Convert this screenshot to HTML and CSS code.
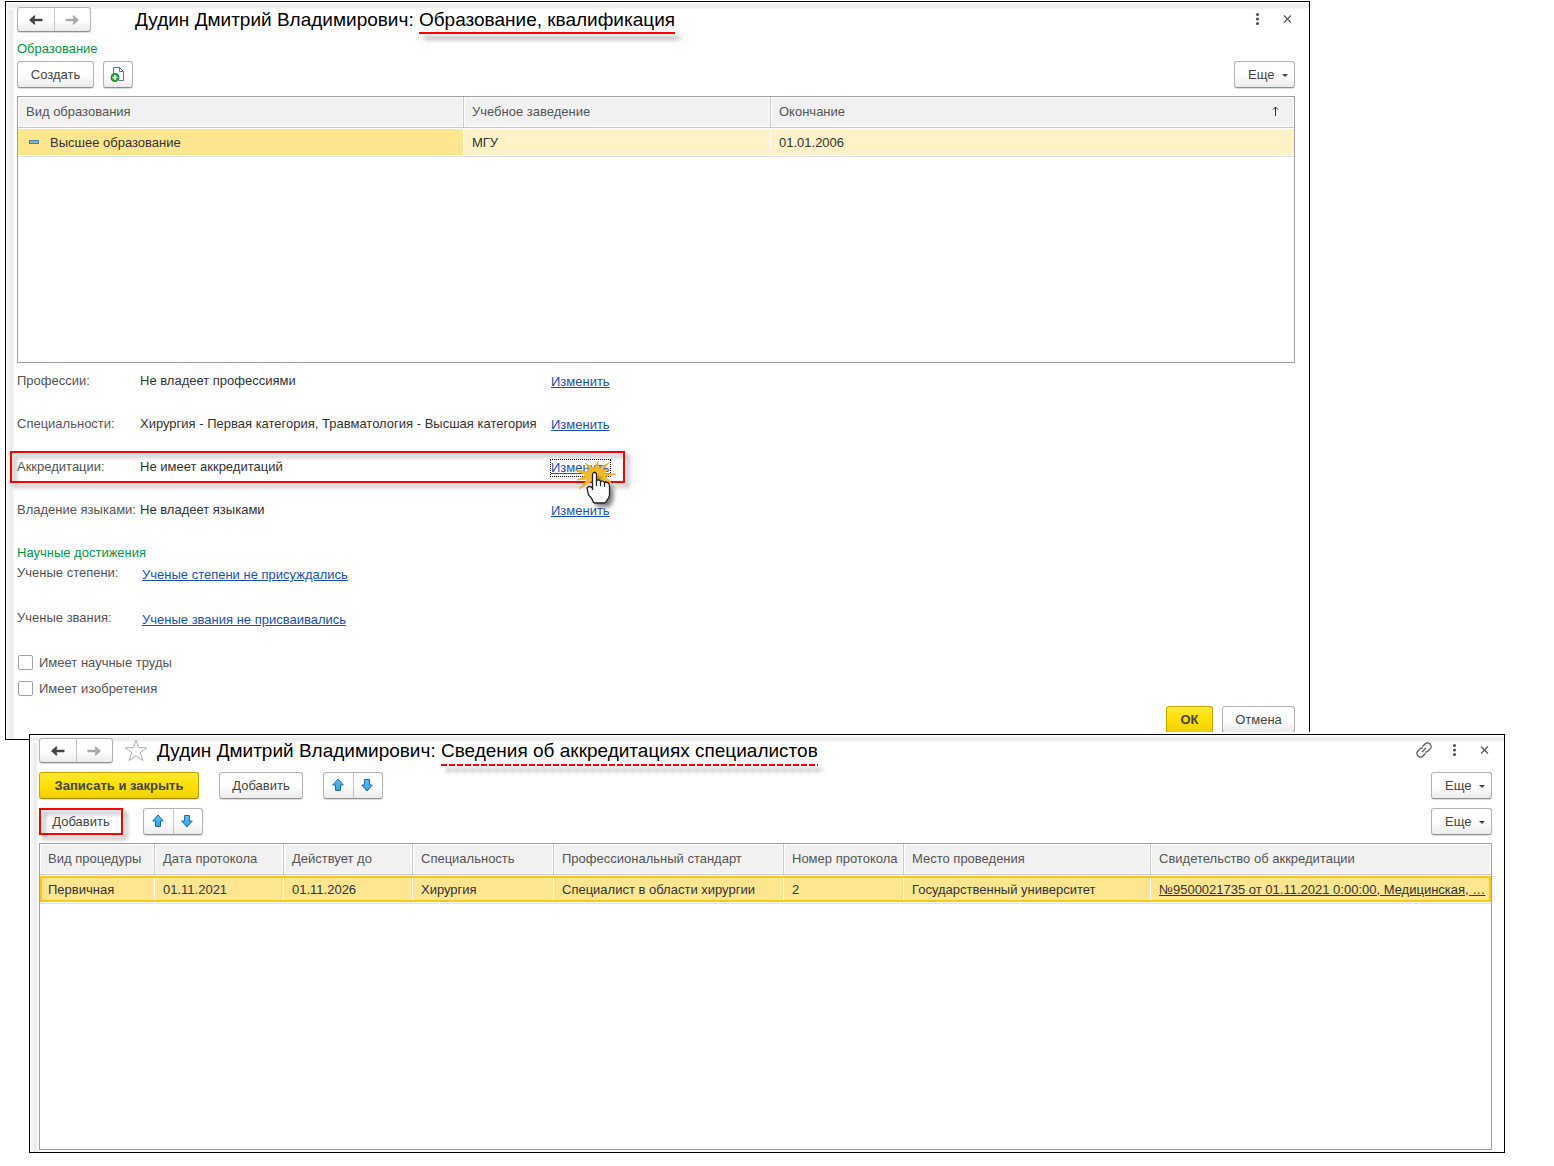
FILE: index.html
```html
<!DOCTYPE html>
<html lang="ru">
<head>
<meta charset="utf-8">
<title>Образование, квалификация</title>
<link rel="stylesheet" href="styles.css">
</head>
<body>
<svg class="defs" aria-hidden="true">
  <defs>
    <linearGradient id="blue" x1="0" y1="0" x2="0" y2="1"><stop offset="0" stop-color="#5cc0f8"/><stop offset="1" stop-color="#35a0e4"/></linearGradient>
    <symbol id="back" viewBox="0 0 16 12"><path d="M1 6 6 1.500H7.500L6.500 4.800H14.500V7.200H6.500L7.500 10.500H6Z"/></symbol>
    <symbol id="forward" viewBox="0 0 16 12"><path d="M15 6 10 1.500H8.500L9.500 4.800H1.500V7.200H9.500L8.500 10.500H10Z"/></symbol>
    <symbol id="up" viewBox="0 0 12 14"><path d="M6 1 11.300 7H8.500V12.500H3.500V7H.7Z" fill="url(#blue)" stroke="#1f6ea8"/></symbol>
    <symbol id="down" viewBox="0 0 12 14"><path d="M6 13 11.300 7H8.500V1.500H3.500V7H.7Z" fill="url(#blue)" stroke="#1f6ea8"/></symbol>
    <symbol id="kebab" viewBox="0 0 16 16"><circle cx="8.500" cy="3.500" r="1.600"/><circle cx="8.500" cy="8" r="1.600"/><circle cx="8.500" cy="12.500" r="1.600"/></symbol>
    <symbol id="close" viewBox="0 0 16 16"><path d="M5 4.500 12 11.500M12 4.500 5 11.500" fill="none" stroke="#555" stroke-width="1.200"/></symbol>
  </defs>
</svg>

<main>
<section class="window window-education">
  <header class="titlebar">
    <div class="pair nav">
      <button type="button" aria-label="Назад"><svg width="16" height="12" fill="#444"><use href="#back"/></svg></button>
      <button type="button" aria-label="Вперед"><svg width="16" height="12" fill="#aaa"><use href="#forward"/></svg></button>
    </div>
    <h1 class="title">Дудин Дмитрий Владимирович: <span class="mark">Образование, квалификация</span></h1>
    <div class="window-tools">
      <button type="button" class="icon" aria-label="Меню"><svg width="16" height="16" fill="#555"><use href="#kebab"/></svg></button>
      <button type="button" class="icon" aria-label="Закрыть"><svg width="16" height="16"><use href="#close"/></svg></button>
    </div>
  </header>

  <h2 class="group-title first">Образование</h2>
  <div class="toolbar">
    <button type="button" class="button create">Создать</button>
    <button type="button" class="button copy" aria-label="Скопировать">
      <svg width="16" height="18" viewBox="0 0 16 18"><path d="M3.500 8V1.500H9.500L13.500 5.500V14.500H9" fill="#fff" stroke="#5f7285"/><path d="M9.500 1.500V5.500H13.500" fill="none" stroke="#5f7285"/><circle cx="5" cy="11.500" r="4" fill="#31a536" stroke="#1c8228"/><path d="M5 9V14M2.500 11.500H7.500" stroke="#fff" stroke-width="1.500"/></svg>
    </button>
    <button type="button" class="button more">Еще<i class="caret"></i></button>
  </div>

  <div class="list list-education">
    <table>
      <colgroup><col class="w-kind"><col class="w-school"><col></colgroup>
      <thead><tr><th>Вид образования</th><th>Учебное заведение</th><th><div class="sorted">Окончание<svg width="8" height="12" viewBox="0 0 8 12"><path d="M3.500 10V1M1 3.500 3.500 1 6 3.500" fill="none" stroke="#333"/></svg></div></th></tr></thead>
      <tbody><tr><td class="current"><i class="dash"></i>Высшее образование</td><td>МГУ</td><td>01.01.2006</td></tr></tbody>
    </table>
  </div>

  <dl class="facts">
    <div class="fact"><dt>Профессии:</dt><dd>Не владеет профессиями</dd><dd><a href="#">Изменить</a></dd></div>
    <div class="fact"><dt>Специальности:</dt><dd>Хирургия - Первая категория, Травматология - Высшая категория</dd><dd><a href="#">Изменить</a></dd></div>
    <div class="fact marked"><dt>Аккредитации:</dt><dd>Не имеет аккредитаций</dd><dd class="pointed"><a href="#" class="focused">Изменить</a>
      <svg class="pointer" width="44" height="50" viewBox="0 0 44 50" aria-hidden="true">
        <path d="M17 11 10 3 19 8.500 23 1 23.500 9 35 2 27.500 10 34 9.500 29 13 41 14 30 16.500 38 24 26 18.500 26 24 20 19 4 29 13 19 2 20 11.500 15.500 0 10 13.500 12 9 7Z" fill="#f5bd2a" stroke="#dc9a12" stroke-width=".6"/>
        <path d="M17.500 14Q19.500 10.500 21.500 14V20.500Q24 19 25.500 21.500 28 20 29.500 22.500 35 22 34.500 27V35Q34 38 31.500 41V43H17.500Q17 39 13.500 35L12 28Q14 25 17.500 28Z" class="hand-shadow"/>
        <path d="M17.500 14Q19.500 10.500 21.500 14V20.500Q24 19 25.500 21.500 28 20 29.500 22.500 35 22 34.500 27V35Q34 38 31.500 41 31 43 29 43H20Q18 43 17.500 40 16 37 13.500 35L12 28Q14 25 17.500 28Z" fill="#fff" stroke="#222" stroke-width="1.300"/>
        <path d="M21.500 20V26M25.500 21V26M29.500 22V27M17.500 27V30" stroke="#222" stroke-width="1.200"/>
      </svg></dd></div>
    <div class="fact"><dt>Владение языками:</dt><dd>Не владеет языками</dd><dd><a href="#">Изменить</a></dd></div>
  </dl>

  <h2 class="group-title">Научные достижения</h2>
  <dl class="facts science">
    <div class="fact"><dt>Ученые степени:</dt><dd><a href="#">Ученые степени не присуждались</a></dd></div>
    <div class="fact"><dt>Ученые звания:</dt><dd><a href="#">Ученые звания не присваивались</a></dd></div>
  </dl>
  <div class="checks">
    <label><input type="checkbox">Имеет научные труды</label>
    <label><input type="checkbox">Имеет изобретения</label>
  </div>
  <footer class="actions">
    <button type="button" class="button primary ok">ОК</button>
    <button type="button" class="button cancel">Отмена</button>
  </footer>
</section>

<section class="window window-accreditation">
  <header class="titlebar">
    <div class="pair nav">
      <button type="button" aria-label="Назад"><svg width="16" height="12" fill="#444"><use href="#back"/></svg></button>
      <button type="button" aria-label="Вперед"><svg width="16" height="12" fill="#aaa"><use href="#forward"/></svg></button>
    </div>
    <button type="button" class="icon star" aria-label="В избранное"><svg width="24" height="24" viewBox="0 0 24 24"><path d="M12 1 14.600 8.700H23L16.200 13.500 18.900 21.500 12 16.500 5.100 21.500 7.800 13.500 1 8.700H9.400Z" fill="#fff" stroke="#b0b0b0"/></svg></button>
    <h1 class="title">Дудин Дмитрий Владимирович: <span class="mark dashed">Сведения об аккредитациях специалистов</span></h1>
    <div class="window-tools">
      <button type="button" class="icon" aria-label="Ссылка"><svg width="16" height="16" viewBox="0 0 16 16" fill="none" stroke="#555" stroke-width="1.200"><path d="M6.500 4.500 9 2Q11.500-.3 14 2T14 7L11.500 9.500Q10.500 10.300 9 10M9.500 11.500 7 14Q4.500 16.300 2 14T2 9L4.500 6.500Q5.500 5.700 7 6M6 10 10 6"/></svg></button>
      <button type="button" class="icon" aria-label="Меню"><svg width="16" height="16" fill="#555"><use href="#kebab"/></svg></button>
      <button type="button" class="icon" aria-label="Закрыть"><svg width="16" height="16"><use href="#close"/></svg></button>
    </div>
  </header>

  <div class="toolbar">
    <button type="button" class="button primary save">Записать и закрыть</button>
    <button type="button" class="button add">Добавить</button>
    <div class="pair">
      <button type="button" aria-label="Вверх"><svg width="12" height="14"><use href="#up"/></svg></button>
      <button type="button" aria-label="Вниз"><svg width="12" height="14"><use href="#down"/></svg></button>
    </div>
    <button type="button" class="button more">Еще<i class="caret"></i></button>
  </div>
  <div class="toolbar">
    <button type="button" class="button add outlined">Добавить</button>
    <div class="pair">
      <button type="button" aria-label="Вверх"><svg width="12" height="14"><use href="#up"/></svg></button>
      <button type="button" aria-label="Вниз"><svg width="12" height="14"><use href="#down"/></svg></button>
    </div>
    <button type="button" class="button more">Еще<i class="caret"></i></button>
  </div>

  <div class="list list-accreditation">
    <table>
      <colgroup><col class="w-procedure"><col class="w-date"><col class="w-date"><col class="w-speciality"><col class="w-standard"><col class="w-number"><col class="w-place"><col></colgroup>
      <thead><tr><th>Вид процедуры</th><th>Дата протокола</th><th>Действует до</th><th>Специальность</th><th>Профессиональный стандарт</th><th>Номер протокола</th><th>Место проведения</th><th>Свидетельство об аккредитации</th></tr></thead>
      <tbody><tr><td>Первичная</td><td>01.11.2021</td><td>01.11.2026</td><td>Хирургия</td><td>Специалист в области хирургии</td><td>2</td><td>Государственный университет</td><td><a href="#" class="document">№9500021735 от 01.11.2021 0:00:00, Медицинская, …</a></td></tr></tbody>
    </table>
  </div>
</section>
</main>
</body>
</html>
```
FILE: styles.css
```css
*, ::before, ::after { box-sizing: border-box; }

body {
  margin: 0;
  background: #fff;
  color: #333;
  font: 13px/16px "Liberation Sans", Arial, sans-serif;
  white-space: nowrap;
}

main { padding-top: 1px; }
h1, h2, dl, dd { margin: 0; font-weight: normal; }
button { font: inherit; color: inherit; }
svg { display: block; }
.defs { position: absolute; width: 0; height: 0; }

.window {
  border: 1px solid #000;
  background:
    linear-gradient(to bottom, #fff, #e9e9e9 50%, #fff) 0 0 / 100% 8px no-repeat,
    linear-gradient(to right, #fff, #e9e9e9 60%, #fff) 0 0 / 9px 100% no-repeat,
    #fff;
}

.window-education {
  margin: 0 244px 0 5px;
  padding: 5px 14px 6px 11px;
}

.window-accreditation {
  position: relative;
  margin: -6px 49px 12px 29px;
  padding: 3px 12px 2px 9px;
  box-shadow: 0 -2px #fff;
}

/* Title bar */
.titlebar { display: flex; align-items: center; height: 25px; }
.title { color: #000; font-size: 19px; line-height: 24px; }
.window-education .title { margin-left: 44px; }
.window-accreditation .title { margin-left: 9px; }
.window-tools { display: flex; gap: 14px; margin: 0 0 2px auto; }
.icon { padding: 0; border: 0; background: none; }
.star { margin-left: 11px; }

.mark { position: relative; }
.mark::after {
  content: "";
  position: absolute;
  left: 0;
  right: 0;
  bottom: -4px;
  height: 2px;
  background: #f00;
  filter: drop-shadow(5px 5px 2px rgba(0, 0, 0, .5));
}
.mark.dashed::after {
  bottom: -5px;
  background: repeating-linear-gradient(to right, #f00 0 6px, transparent 6px 8px);
}

/* Buttons */
.button, .pair {
  height: 27px;
  border: 1px solid #b3b3b3;
  border-bottom-color: #8f8f8f;
  border-radius: 3px;
  background: linear-gradient(#fff 50%, #ebebeb);
  box-shadow: 0 1px 1px rgba(0, 0, 0, .15);
}
.button { padding: 0; color: #444; }
.primary {
  border-color: #c3a500;
  border-bottom-color: #a08800;
  background: linear-gradient(#ffe836, #ffe000 50%, #efd000);
  font-weight: bold;
}
.pair { display: flex; width: 60px; }
.pair button {
  display: flex;
  flex: 1;
  align-items: center;
  justify-content: center;
  padding: 0 1px 1px 0;
  border: 0;
  background: none;
}
.pair button + button { border-left: 1px solid #c4c4c4; }
.nav { width: 74px; height: 25px; }
.nav button { padding: 0; }

.toolbar { display: flex; margin-top: 4px; }
.window-accreditation .toolbar { margin-top: 9px; }
.create { width: 77px; }
.copy { width: 30px; margin-left: 9px; padding: 0 6px; }
.save { width: 160px; margin-right: 20px; }
.add { width: 84px; margin-right: 20px; }
.ok { width: 47px; }
.cancel { width: 73px; }
.outlined {
  position: relative;
  border: 2px solid #f00;
  border-radius: 0;
  background: none;
  box-shadow: none;
}
.outlined::after {
  content: "";
  position: absolute;
  inset: -2px;
  border: 2px solid #f00;
  filter: drop-shadow(4px 4px 2px rgba(0, 0, 0, .4));
}
.more {
  display: flex;
  align-items: center;
  gap: 8px;
  width: 61px;
  margin-left: auto;
  padding-left: 13px;
}
.caret { margin-top: 2px; border: 3px solid transparent; border-top-color: #444; border-bottom: 0; }

/* Lists */
.list { margin-top: 8px; border: 1px solid #a0a0a0; }
.list-education { min-height: 267px; }
.list-accreditation { min-height: 307px; }
table { width: 100%; table-layout: fixed; border-spacing: 0; }
th, td { overflow: hidden; padding: 0 8px; text-align: left; font-weight: normal; }
th {
  height: 31px;
  border-bottom: 1px solid #c8c8c8;
  background: #f1f1f1;
  box-shadow: inset 0 0 0 1px #fff;
  color: #555;
}
th + th { border-left: 1px solid #c8c8c8; }
td {
  height: 29px;
  border-top: 1px solid #fff;
  border-bottom: 1px solid #e2e2e2;
  background: #fdf2c8;
  box-shadow: inset 0 -1px #fff;
}
td + td { border-left: 1px solid #fff; }
td.current { background: #fde68f; }
.w-kind { width: 445px; }
.w-school { width: 307px; }
.w-procedure { width: 114px; }
.w-date { width: 129px; }
.w-speciality { width: 141px; }
.w-standard { width: 230px; }
.w-number { width: 120px; }
.w-place { width: 247px; }
.sorted { display: flex; align-items: center; justify-content: space-between; padding-right: 6px; }
.dash {
  display: inline-block;
  width: 10px;
  height: 4px;
  margin: 0 11px 3px 3px;
  border: 1px solid #4a7f9f;
  background: #7eb4d2;
}
/* The gold frame of the selected row runs unbroken over the column lines */
.list-accreditation td {
  border-left: 0;
  background: #fde68f;
  box-shadow: inset 0 -1px #fff, inset 0 -3px #fbc71d, inset 0 2px #fbc71d, inset 1px 0 #fff;
}
.list-accreditation td + td { padding-left: 9px; }
.list-accreditation td:first-child { box-shadow: inset 0 -1px #fff, inset 0 -3px #fbc71d, inset 2px 2px #fbc71d; }
.list-accreditation td:last-child { padding-right: 0; box-shadow: inset 0 -1px #fff, inset 0 -3px #fbc71d, inset -2px 2px #fbc71d, inset 1px 0 #fff; }

/* Form fields */
.group-title { color: #009646; font-size: 13px; }
.first { margin-top: 9px; }
.facts { margin-top: 10px; }
.fact { display: grid; grid-template-columns: 123px 411px auto; align-items: start; height: 43px; }
.fact dt { color: #555; }
a { color: #1a4fb5; text-underline-offset: 1px; }
a.document { color: #333; }
.fact a { display: inline-block; margin-top: 1px; }
.science { margin-top: 4px; }
.science .fact { grid-template-columns: 125px auto; height: 45px; }
.science a { margin-top: 2px; }

.marked { position: relative; }
.marked::before {
  content: "";
  position: absolute;
  top: -8px;
  left: -7px;
  width: 615px;
  height: 32px;
  border: 2px solid #f00;
  filter: drop-shadow(4px 4px 2px rgba(0, 0, 0, .4));
}
.pointed { position: relative; }
.focused { outline: 1px dotted #000; }
.pointer { position: absolute; top: 1px; left: 24px; }
.hand-shadow { fill: rgba(0, 0, 0, .5); transform: translate(4px, 4px); filter: blur(2px); }

.checks { display: grid; gap: 10px; justify-content: start; color: #555; }
.checks label { display: flex; align-items: flex-start; gap: 6px; }
.checks input {
  appearance: none;
  width: 15px;
  height: 15px;
  margin: 0 0 0 1px;
  border: 1px solid #a0a0a0;
  border-radius: 2px;
  background: #fff;
}
.actions { display: flex; justify-content: flex-end; gap: 9px; margin-top: 9px; }
```
